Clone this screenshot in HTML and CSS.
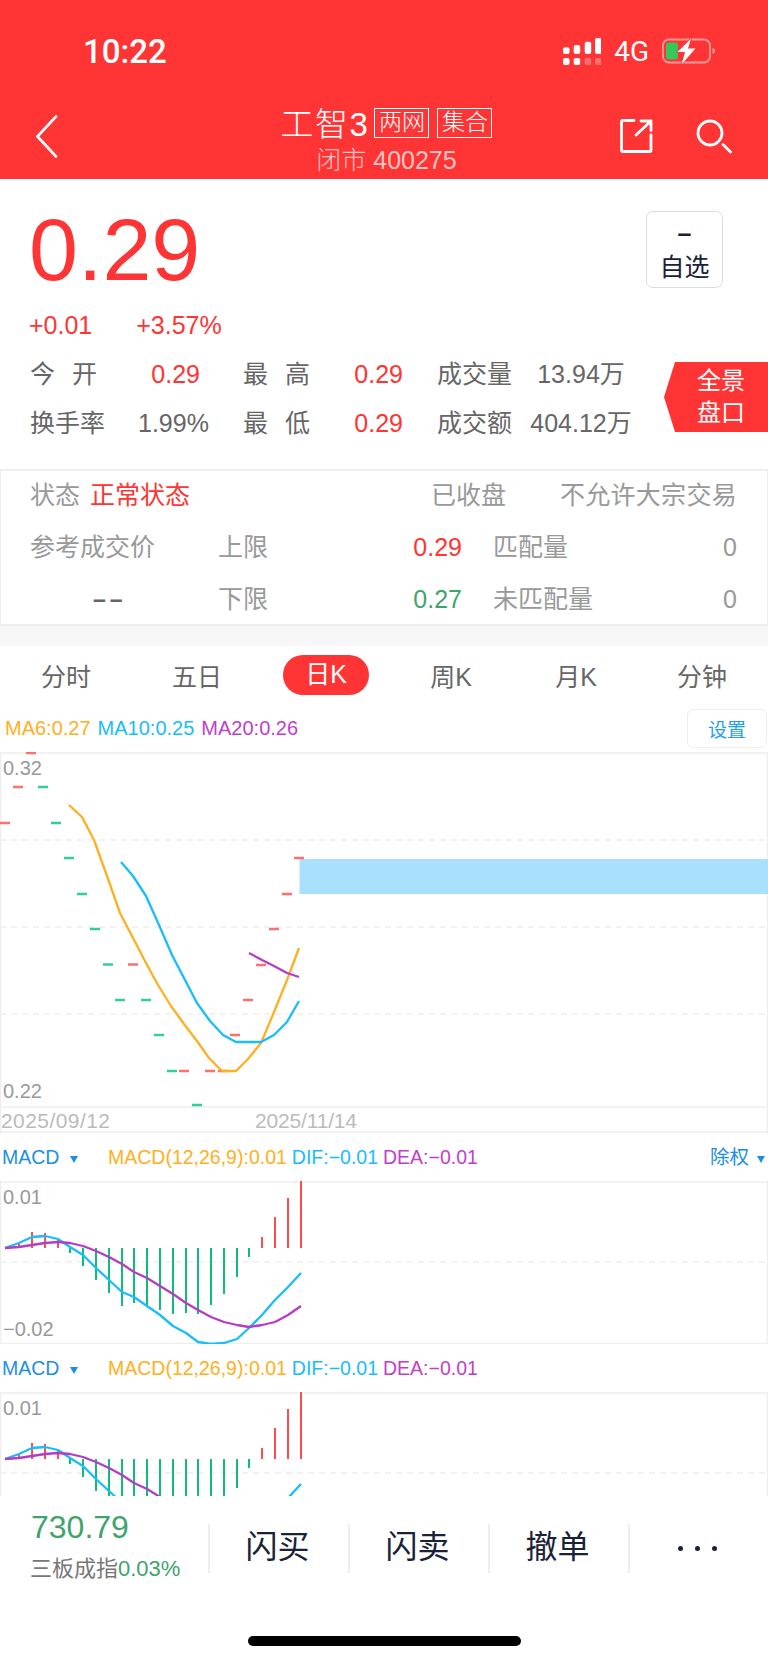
FILE: index.html
```html
<!doctype html>
<html lang="zh">
    <head>
        <meta charset="UTF-8">
        <meta name="viewport" content="width=device-width, initial-scale=1.0">
        <title>工智3</title>
        <link rel="stylesheet" href="styles.css">
    </head>
    <body>
        <header class="top">
            <div class="status-bar">
                <span class="clock">10:22</span>
                <div class="status-icons">
                    <svg class="signal" width="38" height="27" viewBox="0 0 38 27" fill="#fff">
                        <rect x="0" y="9.3" width="6.5" height="6.7" rx="2"/>
                        <rect x="10.7" y="7" width="6.5" height="9" rx="2"/>
                        <rect x="21.7" y="3.7" width="6.5" height="12.3" rx="2"/>
                        <rect x="32" y="0" width="6.5" height="16" rx="2"/>
                        <rect x="0" y="20" width="6.5" height="7" rx="2"/>
                        <rect x="10.7" y="20" width="6.5" height="7" rx="2"/>
                        <rect x="21.7" y="20" width="6.5" height="7" rx="2" fill-opacity=".3"/>
                        <rect x="32" y="20" width="6.5" height="7" rx="2" fill-opacity=".3"/>
                    </svg>
                    <span class="network">4G</span>
                    <svg width="54" height="27" viewBox="0 0 54 27">
                        <rect x="1" y="1.5" width="47" height="23" rx="6" fill="none" stroke="#fff" stroke-opacity=".5" stroke-width="1.8"/>
                        <rect x="4" y="4.5" width="12" height="17" rx="3" fill="#35c759"/>
                        <path d="M50.5 10c1.600.4 2.500 1.600 2.500 3s-.9 2.600-2.500 3z" fill="#fff" fill-opacity=".5"/>
                        <path d="M29 0.5 15.500 14h7.500L19.500 26.500 33.500 10.500h-7.500z" fill="#fff" stroke="#ff3434" stroke-width="1.6" paint-order="stroke"/>
                    </svg>
                </div>
            </div>
            <nav class="nav">
                <svg class="back" width="22" height="43" viewBox="0 0 22 43" fill="none" stroke="#fff" stroke-width="2.6" stroke-linecap="round" stroke-linejoin="round">
                    <path d="M20 1.500 1.500 21.500 20 41.500"/>
                </svg>
                <div class="nav-title">
                    <div class="stock-name">
                        <span class="name-text">工智3</span>
                        <span class="name-tag">两网</span>
                        <span class="name-tag">集合</span>
                    </div>
                    <div class="stock-code">闭市 400275</div>
                </div>
                <div class="nav-icons">
                    <svg width="33" height="34" viewBox="0 0 33 34" fill="none" stroke="#fff" stroke-width="2.8" stroke-linecap="round" stroke-linejoin="round">
                        <path d="M14 1.500H2.500a1 1 0 0 0-1 1V31.500a1 1 0 0 0 1 1H30a1 1 0 0 0 1-1V16"/>
                        <path d="M16 16 31 2M21 2h10v9.500"/>
                    </svg>
                    <svg width="36" height="35" viewBox="0 0 36 35" fill="none" stroke="#fff" stroke-width="2.8" stroke-linecap="round">
                        <circle cx="14" cy="14" r="12"/>
                        <path d="M27 25.500 34.500 33"/>
                    </svg>
                </div>
            </nav>
        </header>

        <section class="quote">
            <div class="price-row">
                <span class="price">0.29</span>
                <button class="watch-btn"><span class="watch-minus">–</span><span class="watch-label">自选</span></button>
            </div>
            <div class="change-row">
                <span>+0.01</span>
                <span>+3.57%</span>
            </div>
            <div class="stats-row">
                <div class="stats">
                    <span class="spread first"><span>今</span><span>开</span></span>
                    <span class="val up">0.29</span>
                    <span class="stat-mid"><span class="spread"><span>最</span><span>高</span></span></span>
                    <span class="val up">0.29</span>
                    <span class="stat-end">成交量</span>
                    <span class="val-center">13.94万</span>

                    <span>换手率</span>
                    <span class="val">1.99%</span>
                    <span class="stat-mid"><span class="spread"><span>最</span><span>低</span></span></span>
                    <span class="val up">0.29</span>
                    <span class="stat-end">成交额</span>
                    <span class="val-center">404.12万</span>
                </div>
                <div class="panorama">全景<br>盘口</div>
            </div>
        </section>

        <section class="panel">
            <div class="panel-top">
                <span>状态<span class="up state">正常状态</span></span>
                <span>已收盘</span>
                <span class="align-end">不允许大宗交易</span>
            </div>
            <div class="panel-row tall">
                <span>参考成交价</span>
                <span>上限</span>
                <span class="up align-end">0.29</span>
                <span class="match"><span>匹配量</span><span>0</span></span>
            </div>
            <div class="panel-row">
                <span class="no-price">––</span>
                <span>下限</span>
                <span class="down align-end">0.27</span>
                <span class="match"><span>未匹配量</span><span>0</span></span>
            </div>
        </section>

        <div class="band"></div>

        <div class="tabs">
            <span class="tab">分时</span>
            <span class="tab">五日</span>
            <span class="tab"><span class="tab-on">日K</span></span>
            <span class="tab">周K</span>
            <span class="tab">月K</span>
            <span class="tab">分钟</span>
        </div>

        <div class="legend-row">
            <div class="legend">
                <span class="c-orange">MA6:0.27</span>
                <span class="c-blue">MA10:0.25</span>
                <span class="c-purple">MA20:0.26</span>
            </div>
            <button class="settings">设置</button>
        </div>

        <!-- viewBox keeps page coordinates, easier to read off the data -->
        <svg class="chart" width="768" height="381" viewBox="0 752 768 381">
            <path class="frame" d="M0 753H768M.5 752V1133M767.5 752V1133M0 1107H768M0 1132H768"/>
            <path class="grid" d="M0 840H768M0 927H768M0 1014H768"/>
            <rect x="299.500" y="859" width="469" height="35" fill="#a8e0fd"/>
            <text class="axis" x="3" y="775">0.32</text>
            <text class="axis" x="3" y="1098">0.22</text>
            <text class="axis light" x="1" y="1128" textLength="109">2025/09/12</text>
            <text class="axis light" x="255" y="1128" textLength="102">2025/11/14</text>
            <path class="tick-up" d="M0 823h10M13 787h10M26 753h10M128 964.500h10M179 1071h10M205 1071h10M218 1071h10M230 1035h10M243 1000h10M256 965h10M269 929h10M282 894h10M294 858h10"/>
            <path class="tick-down" d="M38 787h10M51 823h10M64 858h10M77 894h10M90 929h10M103 964.500h10M115 1000h10M141 1000h10M154 1035h10M167 1071h10M192 1105h10"/>
            <polyline class="line orange" points="69,805 82,817 94,840 107,876 120,913 133,938 146,963 158,985 171,1006 184,1024 197,1041 209,1058 222,1071 236,1071 248,1059 261,1043 274,1012 287,980 299,948"/>
            <polyline class="line blue" points="121,862 133,876 146,896 159,925 172,955 185,980 197,1003 210,1021 223,1035 236,1042 261,1042 274,1035 287,1022 299,1001"/>
            <polyline class="line purple" points="249,953 262,960 274,966 287,973 299,977"/>
        </svg>

        <div class="macd-head">
            <span class="macd-pick">MACD<i class="caret"></i></span>
            <span class="c-orange">MACD(12,26,9):0.01</span>
            <span class="c-blue">DIF:−0.01</span>
            <span class="c-purple">DEA:−0.01</span>
            <span class="macd-adjust">除权<i class="caret"></i></span>
        </div>

        <svg class="chart" width="768" height="163" viewBox="0 1181 768 163">
            <g id="macd-plot">
                <path class="frame" d="M0 1182H768M.5 1181V1344M767.5 1181V1344M0 1343.500H768"/>
                <path class="grid" d="M0 1262H768"/>
                <text class="axis" x="3" y="1204">0.01</text>
                <text class="axis" x="3" y="1336">−0.02</text>
                <path class="bar-up" d="M19 1248V1243M32 1248V1232M45 1248V1233M58 1248V1240M262 1248V1237M275 1248V1217M288 1248V1198M301 1248V1181"/>
                <path class="bar-down" d="M70 1248V1253M83 1248V1266M96 1248V1280M109 1248V1293M122 1248V1306M134 1248V1303M147 1248V1306M160 1248V1310M173 1248V1314M186 1248V1313M198 1248V1314M211 1248V1305M224 1248V1294M237 1248V1277M249 1248V1257"/>
                <polyline class="line blue" points="5,1248 19,1243 32,1237 45,1236 58,1239 70,1247 83,1255 96,1268 109,1280 122,1292 134,1297 147,1306 160,1315 173,1326 186,1333 198,1342 211,1344 224,1343 237,1339 249,1328 262,1315 275,1300 288,1287 301,1273"/>
                <polyline class="line purple" points="5,1248 19,1247 32,1245 45,1243 58,1242 70,1243 83,1246 96,1251 109,1257 122,1264 134,1272 147,1278 160,1286 173,1294 186,1303 198,1310 211,1317 224,1322 237,1325 249,1327 262,1325 275,1322 288,1315 301,1306"/>
            </g>
        </svg>

        <div class="macd-head">
            <span class="macd-pick">MACD<i class="caret"></i></span>
            <span class="c-orange">MACD(12,26,9):0.01</span>
            <span class="c-blue">DIF:−0.01</span>
            <span class="c-purple">DEA:−0.01</span>
        </div>

        <svg class="chart" width="768" height="104" viewBox="0 1181 768 104">
            <use href="#macd-plot"/>
        </svg>

        <footer class="footer">
            <div class="footer-main">
                <div class="index">
                    <div class="index-value">730.79</div>
                    <div class="index-name">三板成指<span class="down">0.03%</span></div>
                </div>
                <div class="action">闪买</div>
                <div class="action">闪卖</div>
                <div class="action">撤单</div>
                <div class="action more"><i></i><i></i><i></i></div>
            </div>
            <div class="home-bar"></div>
        </footer>
    </body>
</html>
```

FILE: styles.css
```css
* {
    box-sizing: border-box;
}

body {
    margin: 0;
    width: 768px;
    height: 1663px;
    overflow: hidden;
    background: #fff;
    font-family: "Liberation Sans", "Noto Sans CJK SC", sans-serif;
    font-size: 25px;
    color: #666;
}

button {
    font-family: inherit;
    background: #fff;
    padding: 0;
}

.up {
    color: #ff3434;
}

.down {
    color: #3fa36d;
}

.c-orange {
    color: #ffb020;
}

.c-blue {
    color: #18bdfc;
}

.c-purple {
    color: #bf3fcb;
}

.top {
    height: 179px;
    background: #ff3434;
    color: #fff;
}

.status-bar {
    height: 100px;
    display: flex;
    align-items: center;
    justify-content: space-between;
    padding: 2px 52px 0 83px;
}

.clock {
    font-family: Roboto, "Liberation Sans", sans-serif;
    font-size: 33px;
    font-weight: 500;
}

.status-icons {
    display: flex;
    align-items: center;
    gap: 13px;
}

.network {
    font-family: Roboto, "Liberation Sans", sans-serif;
    font-size: 28px;
}

.nav {
    height: 79px;
    display: grid;
    grid-template-columns: 1fr auto 1fr;
    padding: 0 36px;
}

.back {
    margin-top: 15px;
}

.nav-title {
    padding: 3px 0 0 5px;
    text-align: center;
}

.stock-name {
    display: flex;
    align-items: center;
    height: 38px;
    font-size: 33px;
    font-weight: 300;
}

.name-text {
    letter-spacing: 1.500px;
}

.name-tag {
    width: 55px;
    height: 30px;
    line-height: 27px;
    margin: 2px 0 0 8px;
    border: 1px solid #fff;
    text-align: center;
    font-size: 23px;
}

.name-text + .name-tag {
    margin-left: 5px;
}

.stock-code {
    margin-top: 5px;
    line-height: 28px;
    font-size: 25px;
    font-weight: 300;
    color: #ffc4c4;
}

.nav-icons {
    display: flex;
    justify-content: flex-end;
    align-items: flex-start;
    gap: 43px;
    padding-top: 19px;
}

.quote {
    height: 290px;
    padding-top: 32px;
}

.price-row {
    display: flex;
    align-items: center;
    justify-content: space-between;
    padding: 0 45px 0 29px;
}

.price {
    font-size: 88px;
    line-height: 77px;
    color: #ff3434;
}

.watch-btn {
    width: 77px;
    height: 77px;
    border: 1.500px solid #ddd;
    border-radius: 7px;
    color: #1a2238;
    font-size: 25px;
    display: flex;
    flex-direction: column;
    align-items: center;
}

.watch-minus {
    height: 38px;
    margin-top: 2px;
    line-height: 38px;
    font-weight: 700;
}

.watch-label {
    line-height: 30px;
}

.change-row {
    display: flex;
    gap: 44px;
    margin-top: 22px;
    padding-left: 29px;
    line-height: 30px;
    font-size: 25px;
    color: #ff3434;
}

.stats-row {
    display: flex;
    align-items: center;
    margin-top: 10px;
}

.stats {
    width: 664px;
    padding-left: 30px;
    display: grid;
    grid-template-columns: 108px 62px 110px 93px 109px 138px;
    grid-auto-rows: 49px;
    line-height: 49px;
}

.spread {
    display: flex;
    justify-content: space-between;
    width: 67px;
}

.stat-mid {
    padding-left: 43px;
}

.stat-end {
    padding-left: 34px;
}

.val {
    text-align: right;
}

.val-center {
    text-align: center;
}

.panorama {
    width: 104px;
    height: 70px;
    margin-bottom: 4px;
    background: #ff3434;
    color: #fff;
    font-size: 24px;
    line-height: 32px;
    padding: 3px 0 0 10px;
    text-align: center;
    clip-path: polygon(11px 0, 100% 0, 100% 100%, 11px 100%, 0 50%);
}

.panel {
    height: 157px;
    border: 2px solid #eee;
    border-width: 2px 1px;
    color: #999;
}

.panel-top {
    height: 48px;
    line-height: 48px;
    display: grid;
    grid-template-columns: 401px 127px 179px;
    padding-left: 29px;
}

.panel-top .align-end {
    letter-spacing: .3px;
}

.state {
    margin-left: 10px;
}

.panel-row {
    height: 49px;
    line-height: 49px;
    display: grid;
    grid-template-columns: 188px 50px 194px 1fr;
    padding-left: 29px;
    white-space: nowrap;
}

.panel-row.tall {
    height: 56px;
    line-height: 56px;
}

.align-end {
    text-align: right;
}

.no-price {
    padding-left: 63px;
    color: #666;
    font-size: 23px;
    font-weight: 700;
    letter-spacing: 4px;
}

.match {
    display: flex;
    justify-content: space-between;
    padding: 0 30px 0 31px;
}

.band {
    height: 20px;
    background: #f7f7f7;
}

.tabs {
    height: 58px;
    display: grid;
    grid-template-columns: 132px 130px 128px 122px 128px 124px;
    align-items: center;
}

.tab {
    text-align: center;
}

.tab-on {
    display: inline-block;
    width: 86px;
    height: 40px;
    line-height: 38px;
    border-radius: 20px;
    background: #ff3434;
    color: #fff;
}

.legend-row {
    height: 48px;
    display: flex;
    align-items: center;
    justify-content: space-between;
    padding: 0 1px 0 5px;
    font-size: 20px;
}

.legend {
    display: flex;
    gap: 7px;
}

.settings {
    width: 80px;
    height: 39px;
    border: 1.500px solid #eee;
    border-radius: 6px;
    font-size: 19px;
    color: #1e9ef0;
}

.chart {
    display: block;
}

.frame {
    fill: none;
    stroke: #eee;
    stroke-width: 1.500;
}

.grid {
    fill: none;
    stroke: #eee;
    stroke-width: 1.500;
    stroke-dasharray: 6 5;
}

.axis {
    font-size: 20px;
    fill: #999;
}

.axis.light {
    font-size: 21px;
    fill: #bbb;
}

.tick-up {
    stroke: #ff6f6f;
    stroke-width: 2.500;
}

.tick-down {
    stroke: #2fcf96;
    stroke-width: 2.500;
}

.bar-up {
    stroke: #ff4d4d;
    stroke-width: 2;
}

.bar-down {
    stroke: #10bd78;
    stroke-width: 2;
}

.line {
    fill: none;
    stroke-width: 2.300;
    stroke-linejoin: round;
}

.line.orange {
    stroke: #ffb020;
}

.line.blue {
    stroke: #18bdfc;
}

.line.purple {
    stroke: #b43cc6;
}

.macd-head {
    height: 48px;
    line-height: 48px;
    display: flex;
    padding: 0 3px 0 2px;
    font-size: 19.500px;
}

.macd-head span + span {
    margin-left: 5px;
}

.macd-pick {
    width: 101px;
    color: #1e8fe0;
}

.macd-head .macd-adjust {
    margin-left: auto;
    color: #1e8fe0;
}

.caret {
    display: inline-block;
    margin-left: 11px;
    vertical-align: 1px;
    border-style: solid;
    border-width: 7px 4px 0;
    border-color: #1e8fe0 transparent transparent;
}

.macd-adjust .caret {
    margin-left: 8px;
}

.footer {
    height: 167px;
    background: #fff;
}

.footer-main {
    display: flex;
    height: 71px;
    padding-top: 16px;
    box-sizing: content-box;
}

.index {
    width: 208px;
    padding-left: 31px;
}

.index-value {
    line-height: 30px;
    font-size: 32px;
    color: #3fa36d;
}

.index-name {
    margin-top: 13px;
    line-height: 28px;
    margin-left: -1px;
    font-size: 22px;
    color: #777;
}

.action {
    flex: 1;
    height: 49px;
    margin-top: 12px;
    padding-right: 3px;
    border-left: 2px solid #eee;
    text-align: center;
    line-height: 46px;
    font-size: 32px;
    color: #1a2238;
}

.more {
    display: flex;
    align-items: center;
    justify-content: center;
    gap: 12px;
}

.more i {
    width: 5px;
    height: 5px;
    border-radius: 50%;
    background: #1a2238;
}

.home-bar {
    width: 273px;
    height: 10px;
    margin: 53px auto 0;
    border-radius: 5px;
    background: #000;
}
```
